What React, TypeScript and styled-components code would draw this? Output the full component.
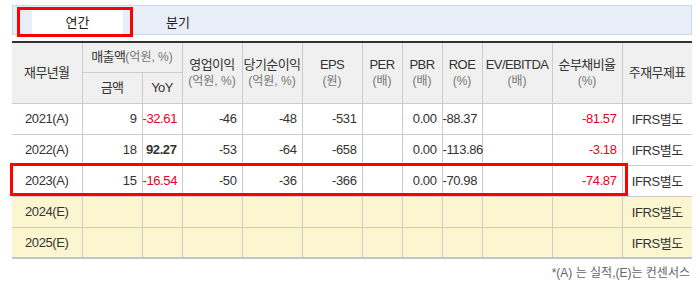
import React from "react";
import styled, { createGlobalStyle } from "styled-components";

const GlobalStyle = createGlobalStyle`
  body {
    margin: 0;
    background: #fff;
    font-family: "Liberation Sans", "Noto Sans CJK KR", sans-serif;
    color: #333;
  }
`;

const Page = styled.div`
  position: relative;
  width: 680px;
  padding: 5px 8px 0 12px;
`;

const TabBar = styled.div`
  display: flex;
  height: 28px;
  padding-left: 19px;
  background: #e8eef8;
  border: 1px solid #cdd7e6;
  align-items: flex-end;
`;

const Tab = styled.div<{ active?: boolean; w: number }>`
  width: ${(p) => p.w}px;
  height: 25px;
  display: flex;
  align-items: center;
  justify-content: center;
  font-size: 13px;
  color: #222;
  background: ${(p) => (p.active ? "#fff" : "transparent")};
`;

const Table = styled.table`
  margin-top: 6px;
  width: 680px;
  border-collapse: collapse;
  table-layout: fixed;
  border-top: 2px solid #333;
  border-bottom: 2px solid #c4c4c4;
`;

const Th = styled.th`
  background: #f0f0f0;
  border: 1px solid #cccccc;
  border-top: none;
  font-weight: normal;
  font-size: 13px;
  color: #333;
  line-height: 16px;
  padding: 0;
  white-space: nowrap;
  letter-spacing: -0.6px;
  &:first-child { border-left: none; }
  &:last-child { border-right: none; }
`;

const Sub = styled.span<{ block?: boolean }>`
  display: ${(p) => (p.block ? "block" : "inline")};
  font-size: 12px;
  color: #777;
  letter-spacing: 0;
`;

const Tr = styled.tr<{ estimate?: boolean }>`
  height: 31px;
  background: ${(p) => (p.estimate ? "#fcf6d0" : "#fff")};
`;

const Td = styled.td<{ neg?: boolean; bold?: boolean; center?: boolean }>`
  border: 1px solid #cccccc;
  padding: 0 5px 0 0;
  font-size: 13px;
  text-align: ${(p) => (p.center ? "center" : "right")};
  color: ${(p) => (p.neg ? "#e8001c" : "#333")};
  font-weight: ${(p) => (p.bold ? "bold" : "normal")};
  letter-spacing: -0.4px;
  white-space: nowrap;
  &:first-child { border-left: none; padding: 0; }
  &:last-child { border-right: none; padding: 0; }
`;

const Note = styled.div`
  text-align: right;
  font-size: 12px;
  color: #666;
  margin-top: 4px;
  padding-right: 2px;
`;

const Highlight = styled.div<{ left: number; top: number; w: number; h: number }>`
  position: absolute;
  left: ${(p) => p.left}px;
  top: ${(p) => p.top}px;
  width: ${(p) => p.w}px;
  height: ${(p) => p.h}px;
  border: 3px solid #ff0000;
  box-sizing: border-box;
  pointer-events: none;
`;

const widths = [70, 60, 40, 60, 60, 60, 40, 40, 40, 70, 70, 70];

type Row = {
  year: string;
  cells: string[];
  estimate?: boolean;
};

const rows: Row[] = [
  { year: "2021(A)", cells: ["9", "-32.61", "-46", "-48", "-531", "", "0.00", "-88.37", "", "-81.57"] },
  { year: "2022(A)", cells: ["18", "92.27", "-53", "-64", "-658", "", "0.00", "-113.86", "", "-3.18"] },
  { year: "2023(A)", cells: ["15", "-16.54", "-50", "-36", "-366", "", "0.00", "-70.98", "", "-74.87"] },
  { year: "2024(E)", cells: Array(10).fill(""), estimate: true },
  { year: "2025(E)", cells: Array(10).fill(""), estimate: true },
];

// YoY and 순부채비율 columns get red negatives
const redCols = [1, 9];

export default function App() {
  return (
    <>
      <GlobalStyle />
      <Page>
        <TabBar>
          <Tab active w={91}>연간</Tab>
          <Tab w={110}>분기</Tab>
        </TabBar>
        <Table>
          <colgroup>
            {widths.map((w, i) => (
              <col key={i} style={{ width: w }} />
            ))}
          </colgroup>
          <thead>
            <tr style={{ height: 30 }}>
              <Th rowSpan={2}>재무년월</Th>
              <Th colSpan={2}>
                매출액<Sub>(억원, %)</Sub>
              </Th>
              <Th rowSpan={2}>
                영업이익<Sub block>(억원, %)</Sub>
              </Th>
              <Th rowSpan={2}>
                당기순이익<Sub block>(억원, %)</Sub>
              </Th>
              <Th rowSpan={2}>
                EPS<Sub block>(원)</Sub>
              </Th>
              <Th rowSpan={2}>
                PER<Sub block>(배)</Sub>
              </Th>
              <Th rowSpan={2}>
                PBR<Sub block>(배)</Sub>
              </Th>
              <Th rowSpan={2}>
                ROE<Sub block>(%)</Sub>
              </Th>
              <Th rowSpan={2}>
                EV/EBITDA<Sub block>(배)</Sub>
              </Th>
              <Th rowSpan={2}>
                순부채비율<Sub block>(%)</Sub>
              </Th>
              <Th rowSpan={2}>주재무제표</Th>
            </tr>
            <tr style={{ height: 31 }}>
              <Th>금액</Th>
              <Th>YoY</Th>
            </tr>
          </thead>
          <tbody>
            {rows.map((r) => (
              <Tr key={r.year} estimate={r.estimate}>
                <Td center>{r.year}</Td>
                {r.cells.map((c, i) => (
                  <Td
                    key={i}
                    neg={redCols.includes(i) && c.startsWith("-")}
                    bold={i === 1 && c !== "" && !c.startsWith("-")}
                  >
                    {c}
                  </Td>
                ))}
                <Td center>IFRS별도</Td>
              </Tr>
            ))}
          </tbody>
        </Table>
        <Note>*(A) 는 실적,(E)는 컨센서스</Note>
        <Highlight left={17} top={7} w={116} h={30} />
        <Highlight left={10} top={163} w={618} h={33} />
      </Page>
    </>
  );
}
